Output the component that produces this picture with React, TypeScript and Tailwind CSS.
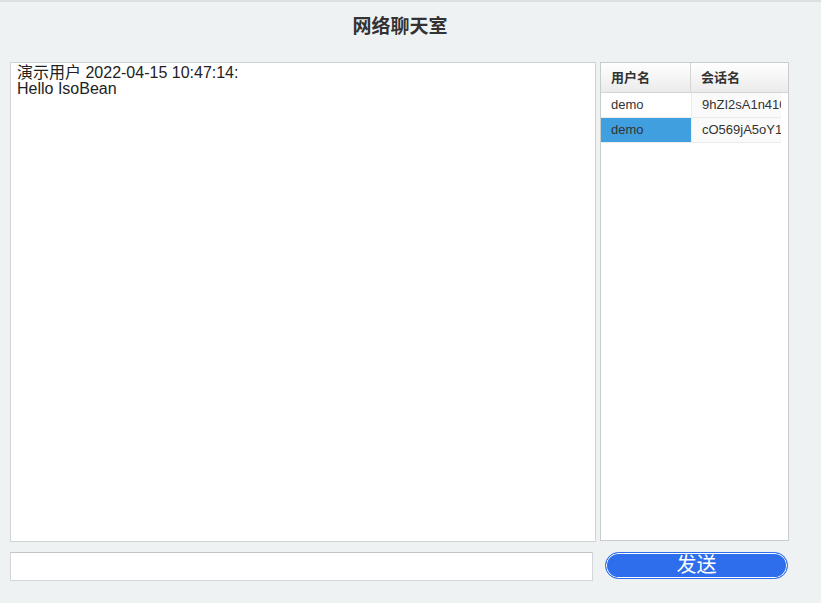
export default function App() {
  const sessions = [
    { user: "demo", session: "9hZI2sA1n410Kx" },
    { user: "demo", session: "cO569jA5oY1pQe" },
  ];

  return (
    <div
      className="w-[821px] h-[603px] bg-[#eef2f3] border-t-2 border-[#dedfe0] overflow-hidden"
      style={{ fontFamily: '"Liberation Sans", "Noto Sans CJK SC", sans-serif' }}
    >
      <div className="w-[800px]">
        <h1 className="h-[60px] pt-[12px] text-center text-[19px] font-bold text-[#333] leading-[26px]">
          网络聊天室
        </h1>

        <div className="flex pl-[10px] gap-[4px] h-[480px]">
          {/* messages */}
          <div className="w-[586px] h-[480px] bg-white border border-[#cfd3d5] px-[6px] pt-[2px] text-[16px] leading-[16px] text-[#222]">
            <div>演示用户 2022-04-15 10:47:14:</div>
            <div>Hello IsoBean</div>
          </div>

          {/* sessions */}
          <div className="w-[189px] h-[479px] bg-white border border-[#c8cccf] overflow-hidden">
            <div className="flex h-[30px] border-b border-[#d4d4d4] bg-gradient-to-b from-white to-[#ebebeb] text-[13px] font-bold text-[#333]">
              <div className="w-[90px] border-r border-[#d4d4d4] pl-[10px] flex items-center">用户名</div>
              <div className="flex-1 pl-[10px] flex items-center">会话名</div>
            </div>
            <div className="w-[180px] text-[13px] text-[#333]">
              {sessions.map((s, i) => (
                <div key={i} className="flex h-[25px] border-b border-[#ececec]">
                  <div
                    className={
                      i === 1
                        ? "w-[90px] pl-[10px] flex items-center bg-[#409fdf]"
                        : "w-[90px] pl-[10px] flex items-center bg-white"
                    }
                  >
                    {s.user}
                  </div>
                  <div className="w-[90px] pl-[10px] flex items-center border-l border-[#ececec] bg-[#fafafa] overflow-hidden whitespace-nowrap">
                    {s.session}
                  </div>
                </div>
              ))}
            </div>
          </div>
        </div>

        <div className="flex items-start pl-[10px] mt-[10px]">
          <input
            className="w-[583px] h-[29px] bg-white border border-[#d3d6d8] border-t-[#c4c4c4] outline-none px-[4px] text-[14px]"
            type="text"
          />
          <button className="ml-[12px] w-[183px] h-[27px] rounded-full bg-[#2e6eec] border border-[#2e6eec] shadow-[inset_0_0_0_1px_#ffffff] text-white text-[20px] leading-[25px] flex items-center justify-center">
            发送
          </button>
        </div>
      </div>
    </div>
  );
}
